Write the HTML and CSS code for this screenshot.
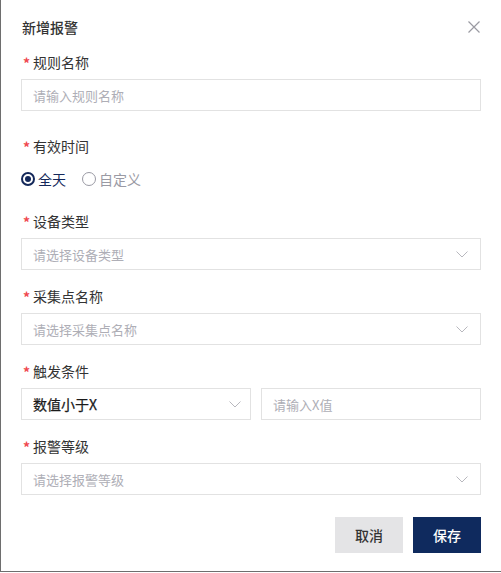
FILE: index.html
```html
<!DOCTYPE html>
<html lang="zh">
<head>
<meta charset="utf-8">
<link rel="stylesheet" href="styles.css">
</head>
<body>
<div class="dialog">
  <div class="header">
    <span class="title">新增报警</span>
    <svg class="close" width="12" height="12" viewBox="0 0 12 12"><path d="M0.5 0.5L11.5 11.5M11.5 0.5L0.5 11.5" stroke="#9a9aa2" stroke-width="1.2" fill="none"/></svg>
  </div>

  <div class="item first">
    <div class="label"><span class="star">*</span>规则名称</div>
    <div class="field"><span class="ph">请输入规则名称</span></div>
  </div>

  <div class="item">
    <div class="label"><span class="star">*</span>有效时间</div>
    <div class="radios">
      <span class="radio on"><span class="dot"></span>全天</span>
      <span class="radio"><span class="dot"></span>自定义</span>
    </div>
  </div>

  <div class="item">
    <div class="label"><span class="star">*</span>设备类型</div>
    <div class="field select"><span class="ph">请选择设备类型</span><svg class="chev" width="12" height="7" viewBox="0 0 12 7"><path d="M0.5 0.5L6 6L11.5 0.5" stroke="#b8b8be" stroke-width="1" fill="none"/></svg></div>
  </div>

  <div class="item">
    <div class="label"><span class="star">*</span>采集点名称</div>
    <div class="field select"><span class="ph">请选择采集点名称</span><svg class="chev" width="12" height="7" viewBox="0 0 12 7"><path d="M0.5 0.5L6 6L11.5 0.5" stroke="#b8b8be" stroke-width="1" fill="none"/></svg></div>
  </div>

  <div class="item">
    <div class="label"><span class="star">*</span>触发条件</div>
    <div class="row">
      <div class="field select half"><span class="val">数值小于X</span><svg class="chev" width="12" height="7" viewBox="0 0 12 7"><path d="M0.5 0.5L6 6L11.5 0.5" stroke="#b8b8be" stroke-width="1" fill="none"/></svg></div>
      <div class="field half"><span class="ph">请输入X值</span></div>
    </div>
  </div>

  <div class="item">
    <div class="label"><span class="star">*</span>报警等级</div>
    <div class="field select"><span class="ph">请选择报警等级</span><svg class="chev" width="12" height="7" viewBox="0 0 12 7"><path d="M0.5 0.5L6 6L11.5 0.5" stroke="#b8b8be" stroke-width="1" fill="none"/></svg></div>
  </div>

  <div class="footer">
    <button class="btn cancel">取消</button>
    <button class="btn save">保存</button>
  </div>
</div>
</body>
</html>
```

FILE: styles.css
```css
html, body {
  margin: 0;
  padding: 0;
  background: #ffffff;
}
body {
  font-family: "Noto Sans CJK SC", "Noto Sans", sans-serif;
  color: #333333;
}
.dialog {
  box-sizing: border-box;
  width: 501px;
  height: 572px;
  border-left: 1px solid #6e6e6e;
  border-bottom: 1px solid #6e6e6e;
  padding: 16px 20px 0 20px;
}
.header {
  display: flex;
  justify-content: space-between;
  align-items: center;
  height: 22px;
  padding-left: 1px;
  padding-right: 1px;
  margin-bottom: 13px;
}
.title {
  font-size: 14px;
  font-weight: 500;
  color: #333333;
  line-height: 22px;
}
.close {
  display: block;
}
.item {
  margin-bottom: 15px;
}
.item.first {
  margin-bottom: 24px;
}
.label {
  font-size: 14px;
  line-height: 22px;
  height: 22px;
  color: #333333;
  margin-bottom: 6px;
  display: flex;
  align-items: center;
}
.star {
  color: #f0484f;
  font-size: 14px;
  font-weight: 700;
  width: 10px;
  padding-left: 2px;
  margin-top: 2px;
}
.field {
  box-sizing: border-box;
  height: 32px;
  border: 1px solid #e2e2e2;
  display: flex;
  align-items: center;
  justify-content: space-between;
  padding: 0 12px 0 11px;
}
.ph {
  font-size: 13px;
  color: #aeaeb6;
}
.val {
  font-size: 14px;
  font-weight: 400;
  color: #1a1a1a;
  -webkit-text-stroke: 0.25px #1a1a1a;
}
.chev {
  display: block;
}
.row {
  display: flex;
  gap: 10px;
}
.field.half:first-child {
  width: 230px;
  padding-right: 9px;
}
.field.half:last-child {
  flex: 1;
}
.radios {
  display: flex;
  align-items: center;
  height: 32px;
  gap: 16px;
}
.radio {
  display: flex;
  align-items: center;
  font-size: 14px;
  color: #9a9aa4;
}
.radio .dot {
  box-sizing: border-box;
  width: 14px;
  height: 14px;
  border-radius: 50%;
  border: 1px solid #9a9aa4;
  margin-right: 3px;
  position: relative;
}
.radio.on {
  color: #14285a;
}
.radio.on .dot {
  border: 2px solid #14285a;
}
.radio.on .dot::after {
  content: "";
  position: absolute;
  left: 2px;
  top: 2px;
  width: 6px;
  height: 6px;
  border-radius: 50%;
  background: #14285a;
}
.footer {
  display: flex;
  justify-content: flex-end;
  gap: 10px;
  margin-top: 22px;
}
.btn {
  width: 68px;
  height: 36px;
  border: none;
  font-family: "Noto Sans CJK SC", "Noto Sans", sans-serif;
  font-size: 14px;
  font-weight: 500;
  padding: 0;
}
.cancel {
  background: #e4e4e6;
  color: #333333;
}
.save {
  background: #0f2a5e;
  color: #ffffff;
}
```
